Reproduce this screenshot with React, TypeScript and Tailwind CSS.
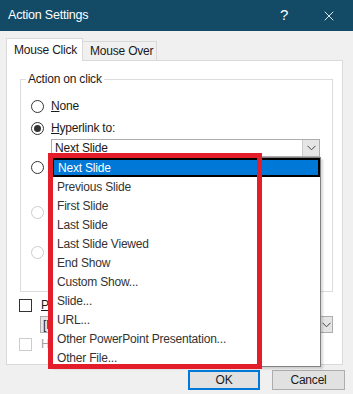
import { X } from "lucide-react";

const items = [
  "Next Slide",
  "Previous Slide",
  "First Slide",
  "Last Slide",
  "Last Slide Viewed",
  "End Show",
  "Custom Show...",
  "Slide...",
  "URL...",
  "Other PowerPoint Presentation...",
  "Other File...",
];

function Radio({ checked, disabled }: { checked?: boolean; disabled?: boolean }) {
  return (
    <span
      className={
        "w-[13px] h-[13px] rounded-full border bg-white flex items-center justify-center shrink-0 " +
        (disabled ? "border-[#cccccc]" : "border-[#333333]")
      }
    >
      {checked && <span className="w-[7px] h-[7px] rounded-full bg-[#333333]" />}
    </span>
  );
}

function Chevron() {
  return (
    <svg width="9" height="6" viewBox="0 0 9 6" fill="none">
      <path d="M0.5 0.8 L4.5 4.8 L8.5 0.8" stroke="#444" strokeWidth="1" />
    </svg>
  );
}

export default function App() {
  return (
    <div
      className="w-[353px] h-[394px] bg-[#f0f0f0] relative overflow-hidden text-[12px] tracking-[-0.2px] text-[#1a1a1a]"
      style={{ fontFamily: '"Liberation Sans", Arial, sans-serif' }}
    >
      {/* title bar */}
      <div className="h-[31px] bg-[#134b66] flex items-center text-white">
        <span className="ml-[8px] text-[12.5px]">Action Settings</span>
        <span className="ml-auto text-[15px] w-[12px] text-center">?</span>
        <span className="w-[46px] flex justify-center mr-[1px] ml-[16px]">
          <X size={16} strokeWidth={1.3} />
        </span>
      </div>

      {/* tabs */}
      <div className="flex items-end ml-[6px] mt-[7px] h-[22px]">
        <div className="h-[23px] w-[77px] bg-white border border-b-0 border-[#d9d9d9] relative z-10 -mb-px flex items-center pl-[7px]">
          Mouse Click
        </div>
        <div className="h-[19px] w-[74px] border border-l-0 border-b-0 border-[#d9d9d9] flex items-center pl-[7px]">
          Mouse Over
        </div>
      </div>

      {/* panel */}
      <div className="ml-[6px] w-[337px] h-[305px] bg-white border border-[#d9d9d9]">
        <div className="relative mt-[18px] ml-[13px] w-[313px] h-[213px] border border-[#dcdcdc]">
          <span className="absolute -top-[9px] left-[5px] bg-white px-[2px] leading-[16px]">Action on click</span>
          <div className="pl-[10px] pt-[18px] flex flex-col">
            <div className="flex items-center h-[16px] gap-[7px]">
              <Radio />
              <span><u>N</u>one</span>
            </div>
            <div className="flex items-center h-[16px] gap-[7px] mt-[6px]">
              <Radio checked />
              <span><u>H</u>yperlink to:</span>
            </div>
            <div className="ml-[20px] mt-[3px] w-[269px] h-[18px] border border-[#adadad] flex items-center">
              <span className="pl-[3px] flex-1">Next Slide</span>
              <span className="w-[17px] h-[16px] bg-[#e5e5e5] border-l border-[#cccccc] flex items-center justify-center">
                <Chevron />
              </span>
            </div>
            <div className="flex items-center h-[16px] mt-[2px]">
              <Radio />
            </div>
            <div className="flex items-center h-[16px] mt-[29px]">
              <Radio disabled />
            </div>
            <div className="flex items-center h-[16px] mt-[24px]">
              <Radio disabled />
            </div>
          </div>
        </div>

        <div className="ml-[12px] mt-[7px] flex items-center h-[12px] gap-[9px]">
          <span className="w-[13px] h-[13px] border border-[#333333] bg-white" />
          <span><u>P</u>lay sound:</span>
        </div>
        <div className="ml-[33px] mt-[5px] w-[293px] h-[17px] border border-[#adadad] bg-[#e5e5e5] flex items-center">
          <span className="pl-[2px] flex-1">[No Sound]</span>
          <span className="w-[11px] h-[15px] flex items-center justify-center">
            <Chevron />
          </span>
        </div>
        <div className="ml-[12px] mt-[5px] flex items-center h-[12px] gap-[9px]">
          <span className="w-[13px] h-[13px] border border-[#cccccc] bg-white" />
          <span className="text-[#a0a0a0]">Highlight click</span>
        </div>
      </div>

      {/* buttons */}
      <div className="flex justify-end gap-[12px] mt-[5px] pr-[8px]">
        <button className="w-[72px] h-[20px] border-2 border-[#0078d7] bg-[#e1e1e1] flex items-center justify-center">
          OK
        </button>
        <button className="w-[73px] h-[20px] border border-[#adadad] bg-[#e1e1e1] flex items-center justify-center">
          Cancel
        </button>
      </div>

      {/* open dropdown list */}
      <div className="absolute left-[51px] top-[157px] w-[270px] h-[210px] bg-white border border-[#828282] shadow-[2px_2px_2px_rgba(0,0,0,0.15)] z-20">
        {items.map((it, i) => (
          <div
            key={it}
            className={
              "h-[19px] flex items-center pl-[4px] " +
              (i === 0 ? "bg-[#0078d7] text-white border-2 border-black" : "pl-[5px] text-[#333333]")
            }
          >
            {it}
          </div>
        ))}
      </div>

      {/* red annotation box */}
      <div className="absolute left-[48px] top-[153px] w-[214px] h-[216px] border-[5px] border-[#e31e2a] z-30" />
    </div>
  );
}
